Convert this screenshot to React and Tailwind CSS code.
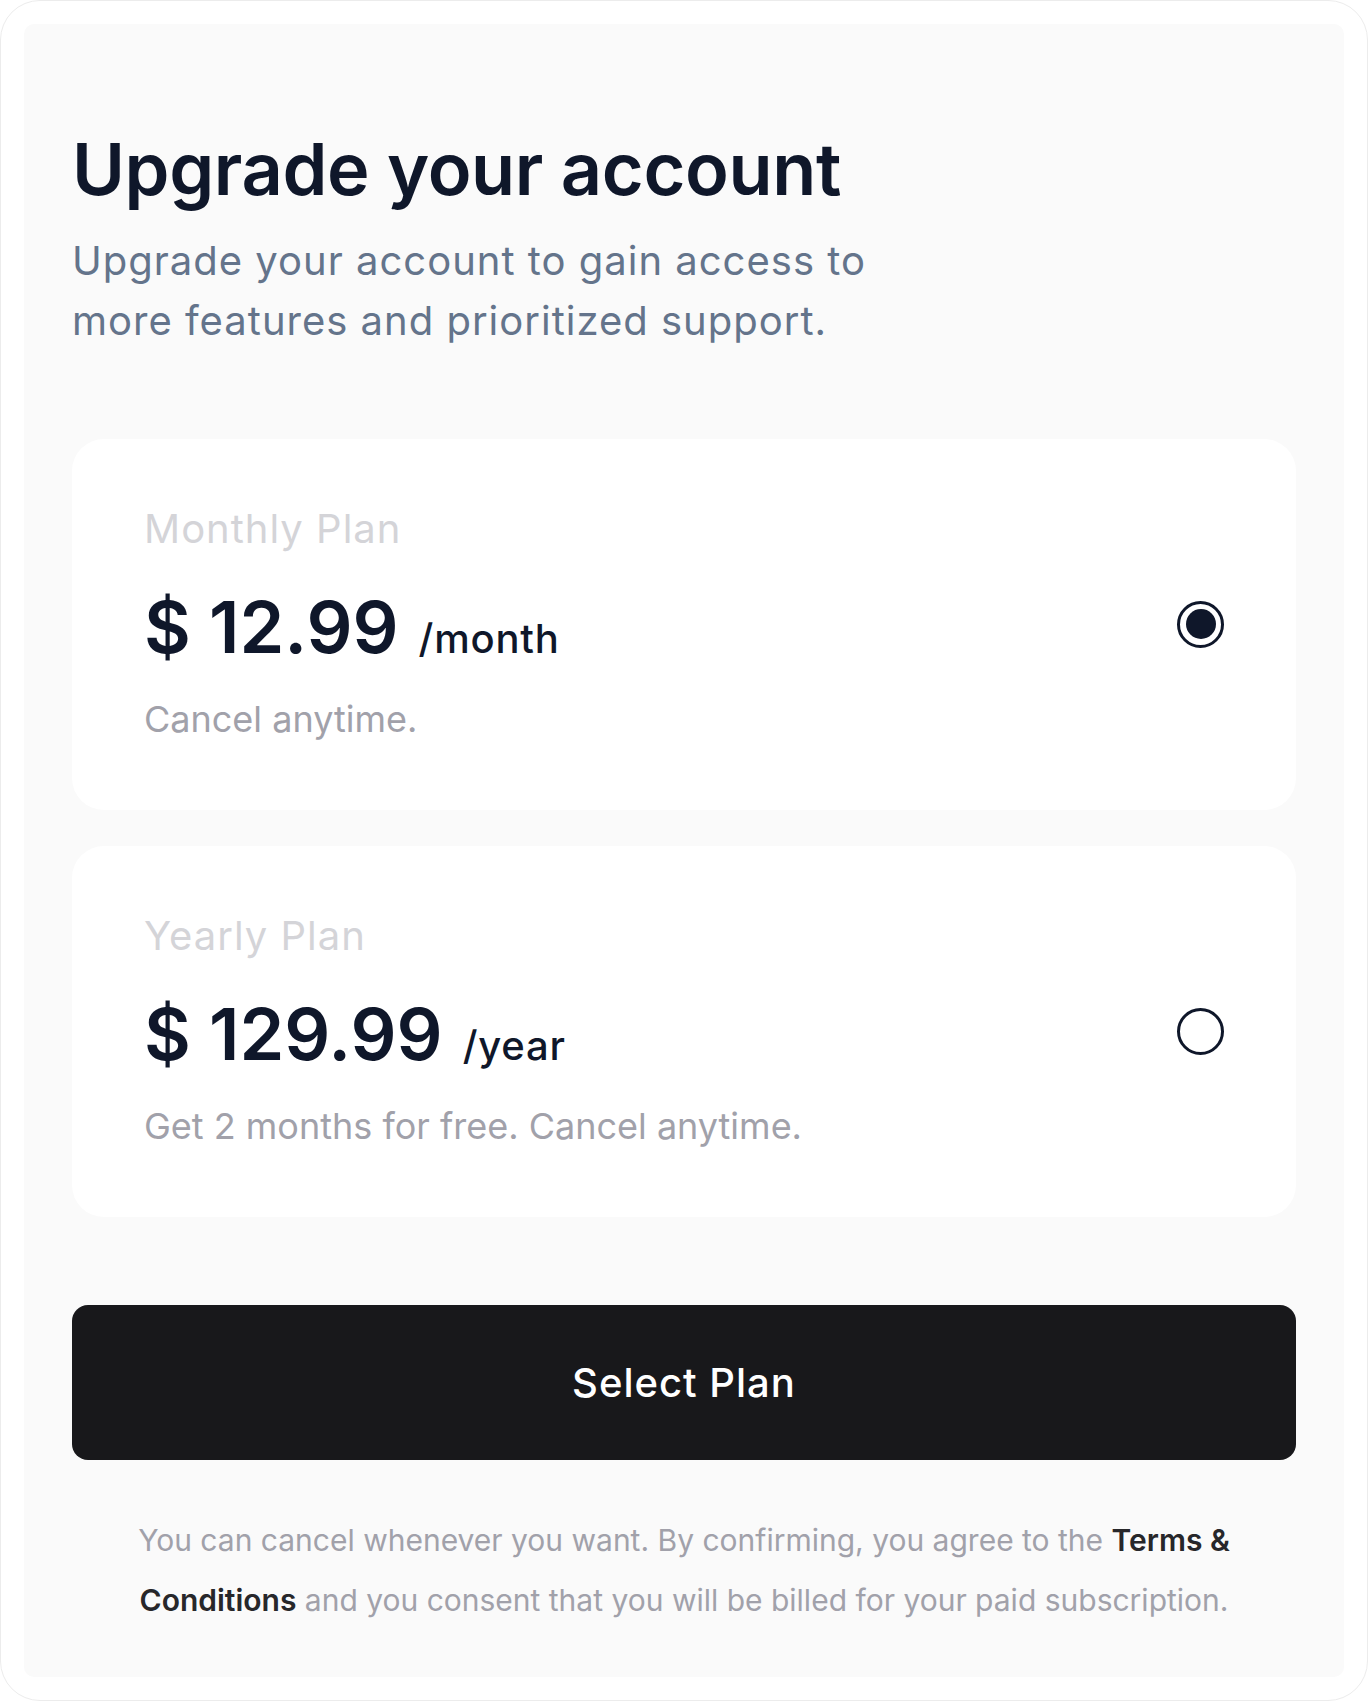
import React, { useState } from 'react';

const plans = [
  { id: 'monthly', name: 'Monthly Plan', price: '$ 12.99', unit: '/month', note: 'Cancel anytime.' },
  { id: 'yearly', name: 'Yearly Plan', price: '$ 129.99', unit: '/year', note: 'Get 2 months for free. Cancel anytime.' },
];

function PlanCard({ plan, selected, onSelect }) {
  return (
    <button
      type="button"
      onClick={() => onSelect(plan.id)}
      className="flex w-full items-center justify-between rounded-[32px] bg-white px-[72px] pt-[60px] pb-[61px] text-left"
    >
      <div className="flex flex-col">
        <span className="text-[40px] leading-[60px] tracking-[0.025em] text-[#d4d4d8]">{plan.name}</span>
        <div className="mt-[32px] flex items-baseline gap-[20px]">
          <span className="text-[72px] leading-none font-semibold text-[#0f172a]">{plan.price}</span>
          <span className="text-[40px] leading-none font-medium tracking-[0.02em] text-[#0f172a]">{plan.unit}</span>
        </div>
        <span className="mt-[26px] text-[36px] leading-[60px] text-[#a1a1aa]">{plan.note}</span>
      </div>
      <span className="flex h-[47px] w-[47px] items-center justify-center rounded-full border-[3px] border-[#0f172a]">
        {selected && <span className="h-[30px] w-[30px] rounded-full bg-[#0f172a]" />}
      </span>
    </button>
  );
}

export default function App() {
  const [selected, setSelected] = useState('monthly');

  return (
    <div
      className="h-[1701px] w-[1368px] rounded-[40px] border border-[#ececec] bg-white p-[23px]"
      style={{ fontFamily: "Inter, 'Noto Sans', sans-serif" }}
    >
      <div className="flex h-full flex-col rounded-[10px] bg-[#fafafa] px-[48px] pt-[109px]">
        <h1 className="text-[72px] leading-none font-semibold tracking-[-0.005em] text-[#0f172a]">Upgrade your account</h1>
        <p className="mt-[26px] max-w-[880px] text-[40px] leading-[60px] tracking-[0.025em] text-[#64748b]">
          Upgrade your account to gain access to more features and prioritized support.
        </p>

        <div className="mt-[88px] flex flex-col gap-[36px]">
          {plans.map((plan) => (
            <PlanCard key={plan.id} plan={plan} selected={selected === plan.id} onSelect={setSelected} />
          ))}
        </div>

        <button
          type="button"
          className="mt-[88px] flex h-[155px] w-full items-center justify-center rounded-[16px] bg-[#18181b] text-[40px] font-medium tracking-[0.025em] text-white"
        >
          Select Plan
        </button>

        <p className="mt-[50px] px-[60px] text-center text-[30px] leading-[60px] text-[#a1a1aa]">
          You can cancel whenever you want. By confirming, you agree to the{' '}
          <span className="font-semibold text-[#27272a]">Terms &amp; Conditions</span> and you consent that you will be
          billed for your paid subscription.
        </p>
      </div>
    </div>
  );
}
